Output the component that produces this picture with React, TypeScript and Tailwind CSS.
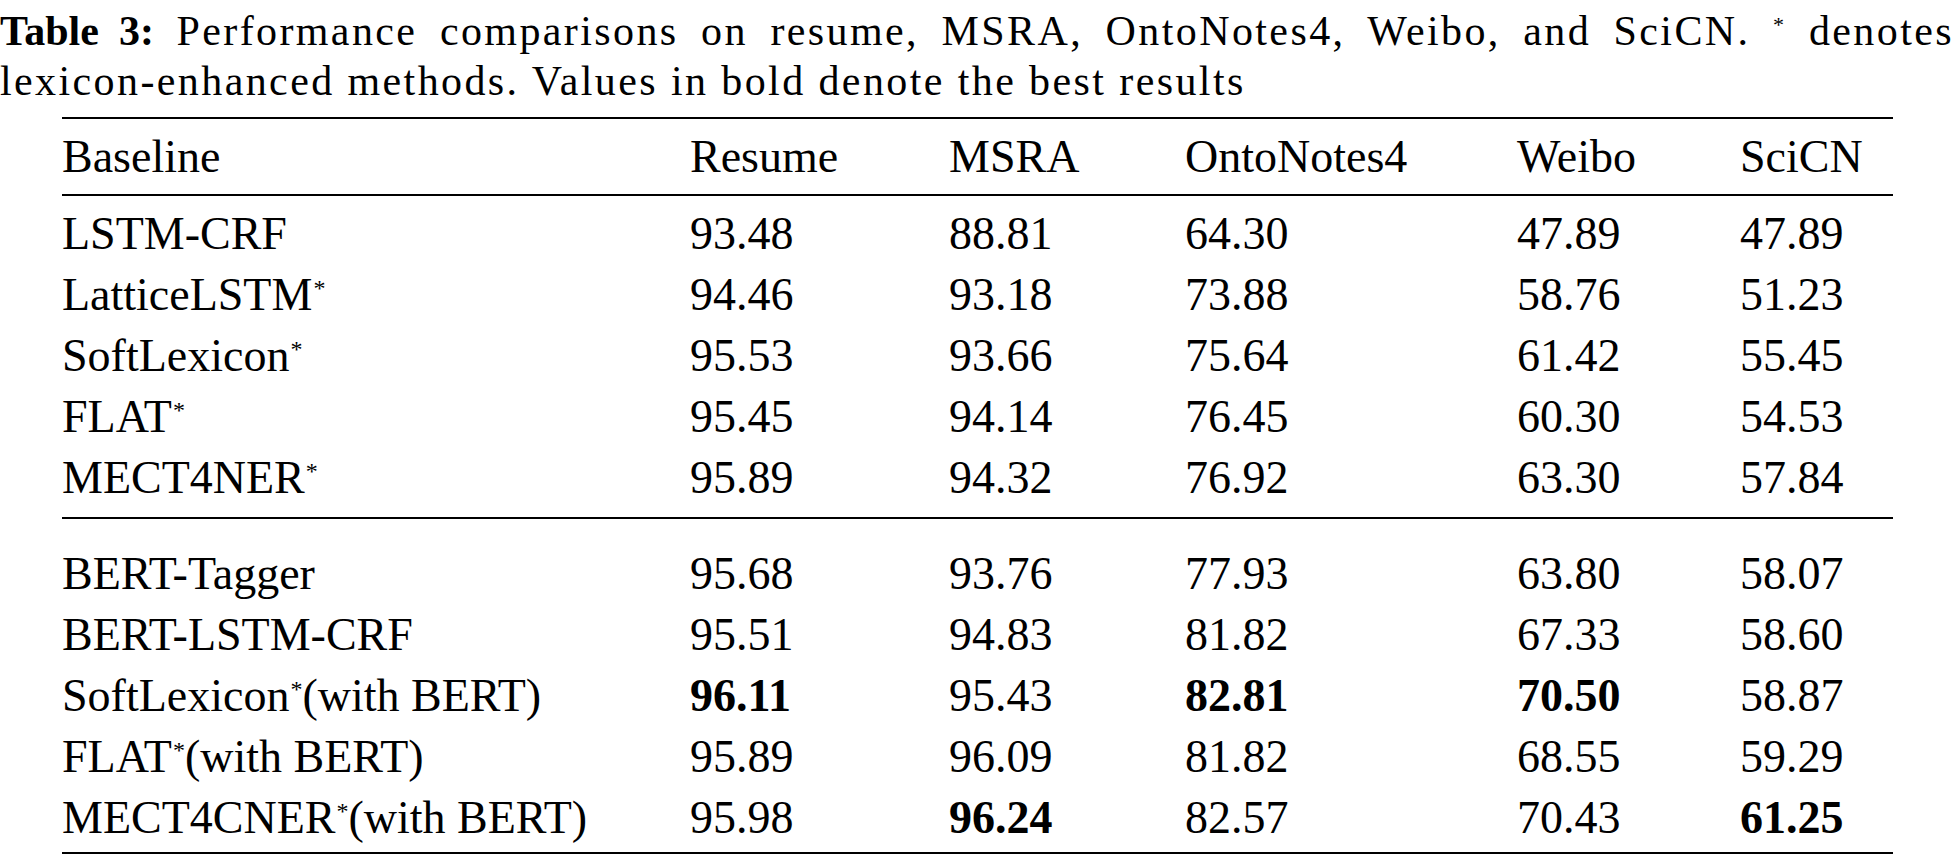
import React from 'react';

type Cell = { v: string; b?: boolean };
type Row = { name: string; star?: boolean; suffix?: string; cells: Cell[] };

const c = (v: string, b = false): Cell => ({ v, b });

const lexiconRows: Row[] = [
    { name: 'LSTM-CRF', cells: [c('93.48'), c('88.81'), c('64.30'), c('47.89'), c('47.89')] },
    { name: 'LatticeLSTM', star: true, cells: [c('94.46'), c('93.18'), c('73.88'), c('58.76'), c('51.23')] },
    { name: 'SoftLexicon', star: true, cells: [c('95.53'), c('93.66'), c('75.64'), c('61.42'), c('55.45')] },
    { name: 'FLAT', star: true, cells: [c('95.45'), c('94.14'), c('76.45'), c('60.30'), c('54.53')] },
    { name: 'MECT4NER', star: true, cells: [c('95.89'), c('94.32'), c('76.92'), c('63.30'), c('57.84')] },
];

const bertRows: Row[] = [
    { name: 'BERT-Tagger', cells: [c('95.68'), c('93.76'), c('77.93'), c('63.80'), c('58.07')] },
    { name: 'BERT-LSTM-CRF', cells: [c('95.51'), c('94.83'), c('81.82'), c('67.33'), c('58.60')] },
    { name: 'SoftLexicon', star: true, suffix: '(with BERT)', cells: [c('96.11', true), c('95.43'), c('82.81', true), c('70.50', true), c('58.87')] },
    { name: 'FLAT', star: true, suffix: '(with BERT)', cells: [c('95.89'), c('96.09'), c('81.82'), c('68.55'), c('59.29')] },
    { name: 'MECT4CNER', star: true, suffix: '(with BERT)', cells: [c('95.98'), c('96.24', true), c('82.57'), c('70.43'), c('61.25', true)] },
];

const headers = ['Baseline', 'Resume', 'MSRA', 'OntoNotes4', 'Weibo', 'SciCN'];

const gridCols = 'grid grid-cols-[628px_259px_236px_332px_223px_1fr]';

const TableRow: React.FC<{ row: Row }> = ({ row }) => (
    <div className={`${gridCols} h-[61px] leading-[61px]`}>
        <div className="whitespace-nowrap">
            {row.name}
            {row.star && <span className="text-[24px] align-[14px] leading-none ml-[1px]">*</span>}
            {row.suffix}
        </div>
        {row.cells.map((cell, i) => (
            <div key={i} className={cell.b ? 'font-bold' : ''}>{cell.v}</div>
        ))}
    </div>
);

export default function App() {
    return (
        <div className="w-[1954px] h-[858px] bg-white text-black font-['Liberation_Serif',serif] overflow-hidden">
            <div className="text-[42px] leading-[50px] tracking-[2.4px]">
                <p className="text-justify [text-align-last:justify]">
                    <span className="font-bold tracking-normal">Table 3:</span> Performance comparisons on resume, MSRA, OntoNotes4, Weibo, and SciCN. <span className="text-[22px] align-[13px]">*</span> denotes
                </p>
                <p>lexicon-enhanced methods. Values in bold denote the best results</p>
            </div>
            <div className="ml-[62px] w-[1831px] mt-[11px] text-[46px]">
                <div className="border-t-2 border-black pt-[7px] pb-[7px] border-b-2">
                    <div className={`${gridCols} h-[61px] leading-[61px]`}>
                        {headers.map(h => (
                            <div key={h}>{h}</div>
                        ))}
                    </div>
                </div>
                <div className="pt-[7px] pb-[9px] border-b-2 border-black">
                    {lexiconRows.map(r => (
                        <TableRow key={r.name} row={r} />
                    ))}
                </div>
                <div className="pt-[24px] pb-[4px] border-b-2 border-black">
                    {bertRows.map(r => (
                        <TableRow key={r.name + (r.suffix ?? '')} row={r} />
                    ))}
                </div>
            </div>
        </div>
    );
}
